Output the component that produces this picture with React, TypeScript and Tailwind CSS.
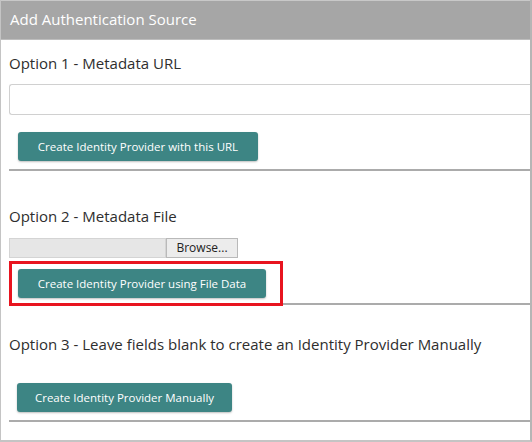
import React from "react";

const font = { fontFamily: '"Open Sans", "Noto Sans", sans-serif' };

const TealButton = ({ label, className = "" }: { label: string; className?: string }) => (
  <button
    className={`h-[29px] rounded-[3px] bg-[#3d8584] text-white text-[11.5px] whitespace-nowrap flex items-center justify-center shadow-[0_1px_2px_rgba(0,0,0,0.25)] ${className}`}
  >
    {label}
  </button>
);

const Divider = ({ className = "" }: { className?: string }) => (
  <div className={`h-[2px] bg-[#ababab] ${className}`} />
);

export default function App() {
  return (
    <div
      style={font}
      className="w-[532px] h-[442px] bg-white border-l border-b-2 border-r-2 border-[#c4c4c4] border-r-[#b5b5b5] flex flex-col overflow-hidden"
    >
      <div className="h-[40px] bg-[#a6a6a6] border-t border-[#c8c8c8] border-b border-b-[#bdbdbd] flex items-center px-[9px] pb-[2px] text-white text-[15px]">
        Add Authentication Source
      </div>

      <div className="pl-[8px] flex flex-col text-[#2e2e2e]">
        {/* option 1 */}
        <div className="mt-[12px] text-[15px] leading-[22px]">Option 1 - Metadata URL</div>
        <input
          type="text"
          className="mt-[10px] h-[31px] w-full border border-[#d0d0d0] border-r-0 rounded-l-[3px] outline-none"
        />
        <TealButton label="Create Identity Provider with this URL" className="mt-[17px] ml-[9px] self-start w-[240px]" />
        <Divider className="mt-[8px]" />

        {/* option 2 */}
        <div className="mt-[34px] text-[15px] leading-[22px]">Option 2 - Metadata File</div>
        <div className="mt-[11px] flex h-[20px] self-start">
          <div className="w-[157px] bg-[#e6e6e6] border border-[#d4d4d4]" />
          <div className="w-[72px] bg-[#ececec] border border-[#b9b9b9] flex items-center justify-center text-[12px] text-[#222]">
            Browse...
          </div>
        </div>
        <div className="flex items-end">
          <div className="mt-[3px] w-[274px] h-[45px] border-[3px] border-[#e8141f] flex items-center pl-[6px]">
            <TealButton label="Create Identity Provider using File Data" className="w-[248px]" />
          </div>
          <Divider className="flex-1 mb-[1px]" />
        </div>

        {/* option 3 */}
        <div className="mt-[27px] text-[15px] leading-[22px]">Option 3 - Leave fields blank to create an Identity Provider Manually</div>
        <TealButton label="Create Identity Provider Manually" className="mt-[28px] ml-[8px] self-start w-[215px]" />
        <Divider className="mt-[8px]" />
      </div>
    </div>
  );
}
